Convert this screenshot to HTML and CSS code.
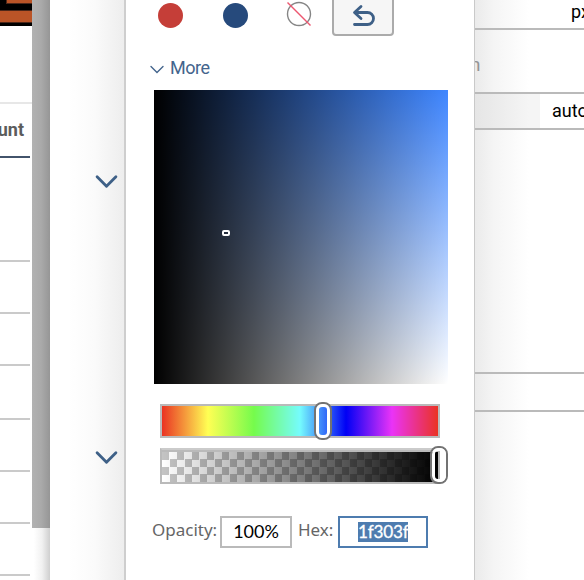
FILE: index.html
```html
<!DOCTYPE html>
<html lang="en">
<head>
<meta charset="utf-8">
<title>Color picker</title>
<link rel="stylesheet" href="styles.css">
</head>
<body>
<div class="app">
  <aside class="list">
    <div class="banner"><i class="stripe-top"></i><i class="stripe"></i></div>
    <div class="space"></div>
    <div class="heading"><span>unt</span></div>
    <div class="row first"></div>
    <div class="row"></div>
    <div class="row"></div>
    <div class="row tall"></div>
    <div class="row"></div>
    <div class="row"></div>
    <div class="row"></div>
  </aside>
  <div class="gutter"><div class="shade"></div></div>
  <main class="panel">
    <div class="sections">
      <svg class="chevron" viewBox="0 0 22 14"><path d="M2 2.5 11 11.5 20 2.5"/></svg>
      <svg class="chevron" viewBox="0 0 22 14"><path d="M2 2.5 11 11.5 20 2.5"/></svg>
    </div>
    <div class="form">
      <div class="field unit">px</div>
      <div class="label">n</div>
      <div class="field auto"><span>auto</span></div>
      <div class="blank"></div>
      <div class="field empty"></div>
    </div>
  </main>
  <section class="popover">
    <div class="swatches">
      <span class="dot red"></span>
      <span class="dot blue"></span>
      <svg class="none" viewBox="0 0 28 28"><circle cx="14" cy="14" r="11.5"/><path d="M2.5 2.5 25.5 25.5"/></svg>
      <button class="undo" type="button"><svg viewBox="0 0 24 24"><path d="M10 2.500 3.500 8.500 10 14.500M4 8.500H16.500a6 6 0 0 1 0 12H3.500"/></svg></button>
    </div>
    <div class="more"><svg viewBox="0 0 14 9"><path d="M1 1.500 7 7.500 13 1.500"/></svg><span>More</span></div>
    <div class="spectrum"><i class="cursor"></i></div>
    <div class="slider hue"><i class="thumb"></i></div>
    <div class="slider alpha"><div class="ramp"></div><i class="thumb"></i></div>
    <div class="values">
      <label class="opacity-label">Opacity:</label><div class="input opacity">100%</div>
      <label class="hex-label">Hex:</label><div class="input hex"><mark>1f303f</mark></div>
    </div>
  </section>
</div>
</body>
</html>
```
FILE: styles.css
```css
* { box-sizing: border-box; }
body { margin: 0; background: #fff; font-family: Roboto, "Liberation Sans", sans-serif; font-size: 18px; color: #000; }
.app { position: relative; display: flex; width: 584px; height: 580px; overflow: hidden; }
i { display: block; }

.list { flex: 0 0 32px; overflow: hidden; }
.banner { height: 26px; background: #000; display: flex; flex-direction: column; }
.stripe-top { height: 4px; margin-left: 6px; background: #ba5427; border: solid #4d2719; border-width: 0 0 1px 1px; }
.stripe { height: 13px; margin-top: 6px; background: #ba5427; border: solid #4d2719; border-width: 1px 0; }
.space { height: 78px; border-bottom: 2px solid #e7e7e7; }
.heading { width: 30px; height: 54px; border-bottom: 2px solid #42536b; display: flex; justify-content: flex-end; padding: 14px 6px 0 0; font-weight: 700; line-height: 24px; color: #5c5c5c; }
.row { width: 30px; height: 52px; border-bottom: 2px solid #cacaca; }
.row.first { height: 104px; }
.row.tall { height: 54px; }

.gutter { flex: 0 0 18px; background: linear-gradient(90deg, #fff 10%, #f1f1f1 55%, #cfcfcf); }
.shade { height: 528px; background: linear-gradient(90deg, #b2b2b2, #aaa 50%, #969696); }

.panel { flex: 0 0 534px; display: flex; background: #fff; }
.sections { flex: 0 0 75px; background: linear-gradient(90deg, #fff 25%, #fafafa 60%, #ededed); padding: 174px 0 0 45px; display: flex; flex-direction: column; gap: 261px; }
.chevron { width: 23px; height: 15px; }
.chevron path { fill: none; stroke: #3e6087; stroke-width: 2.7; stroke-linecap: round; stroke-linejoin: round; }
.form { margin-left: 349px; flex: 0 0 110px; background: linear-gradient(90deg, #eaeaea, #f5f5f5 20px, #fff 55px); }
.field { line-height: 26px; white-space: nowrap; }
.unit { height: 30px; border-bottom: 2px solid #bababa; padding-left: 97px; line-height: 24px; }
.label { height: 62px; padding-top: 23px; line-height: 24px; margin-left: -4px; color: #949494; font-size: 19px; }
.auto { height: 38px; border: solid #bababa; border-width: 2px 0; display: flex; background: linear-gradient(90deg, #e5e5e5, #f5f5f5 55px); }
.auto span { margin-left: 66px; padding: 4px 0 0 12px; flex: 1; background: #fff; }
.blank { height: 242px; }
.empty { height: 40px; border: solid #bababa; border-width: 2px 0; }

.popover { position: absolute; left: 124px; top: 0; width: 351px; height: 580px; background: #fff; border: solid #c9c9c9; border-width: 0 1px 0 2px; border-left-color: #cecece; padding-left: 26px; }
.swatches { display: flex; height: 36px; align-items: flex-start; padding-left: 6px; }
.dot { width: 25px; height: 25px; border-radius: 50%; margin-top: 3px; }
.red { background: #c53e38; }
.blue { background: #264a7c; margin-left: 40px; }
.none { width: 28px; height: 28px; margin: -0.5px 0 0 37px; overflow: visible; fill: none; }
.none circle { stroke: #858585; stroke-width: 1.4; }
.none path { stroke: #ed5770; stroke-width: 1.4; }
.undo { width: 62px; height: 40px; margin: -4px 0 0 19px; padding: 4px 0 0; border: 2px solid #ababab; border-radius: 4px; background: #f6f6f6; display: flex; justify-content: center; }
.undo svg { width: 24px; height: 24px; margin-top: 2px; fill: none; stroke: #3e6087; stroke-width: 2.8; stroke-linecap: round; stroke-linejoin: round; }
.more { height: 54px; display: flex; align-items: flex-start; padding-top: 20px; color: #44658d; line-height: 24px; font-size: 18px; letter-spacing: -0.45px; }
.more svg { width: 14px; height: 9px; margin: 9px 6px 0 -2px; fill: none; stroke: #44658d; stroke-width: 1.4; stroke-linecap: round; }
.spectrum { position: relative; width: 294px; height: 294px; margin-left: 2px; background: linear-gradient(90deg, #000, transparent), linear-gradient(#3f86ff, #fff); }
.cursor { position: absolute; left: 68px; top: 140px; width: 8px; height: 6px; border: 2px solid #fff; border-radius: 2px; }
.slider { position: relative; width: 280px; margin-left: 8px; border: 2px solid #bababa; }
.hue { height: 34px; margin-top: 20px; background: linear-gradient(90deg, #ea3323, #ffff54 16.67%, #75fb4c 33.33%, #75fbfd 50%, #0000f5 66.67%, #ea33f7 83.33%, #ea3323); }
.alpha { height: 36px; margin-top: 10px; padding-top: 2px; border-top-color: #cbcbcb; background: #bababa; }
.ramp { height: 30px; background: linear-gradient(90deg, transparent, #000), repeating-conic-gradient(#fff 0 25%, #c4c4c4 0 50%) 0 0 / 15px 15px; }
.thumb { position: absolute; width: 18px; height: 38px; top: -4px; left: 152px; border: 2px solid #737373; border-radius: 8px; }
.thumb::after { content: ""; position: absolute; inset: 0; border: 3px solid #fff; border-radius: 6px; }
.alpha .thumb { left: 268px; }
.values { display: flex; margin-top: 32px; font-family: Lato, "Noto Sans", sans-serif; }
.values label { font-family: "Noto Sans", sans-serif; color: #666; line-height: 28px; height: 32px; font-size: 17px; white-space: nowrap; }
.opacity-label { width: 68px; }
.input { height: 32px; border: 2px solid #bababa; line-height: 27px; text-align: center; font-size: 18px; }
.opacity { width: 72px; }
.hex-label { width: 40px; margin-left: 6px; }
.hex { width: 90px; border-color: #4e7caf; display: flex; justify-content: center; align-items: center; }
mark { width: 50px; height: 20px; line-height: 19px; background: #4e7caf; color: #fff; font-size: 17.2px; -webkit-text-stroke: 0.3px #fff; letter-spacing: -0.25px; text-align: left; overflow: hidden; white-space: nowrap; }
```
